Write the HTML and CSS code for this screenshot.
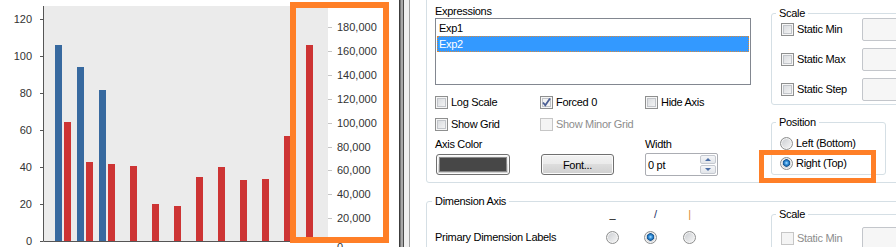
FILE: index.html
```html
<!DOCTYPE html>
<html lang="en">

<head>
    <meta charset="UTF-8">
    <meta name="viewport" content="width=device-width, initial-scale=1.0">
    <title>Chart Properties - Axes</title>
    <link rel="stylesheet" href="styles.css">
</head>

<body>
    <div class="window">
        <div class="chart">
            <svg width="398" height="247" viewBox="0 0 398 247">
                <rect x="44" y="6" width="284" height="235" fill="#ebebeb" />

                <!-- left axis -->
                <path d="M43.5 6V241.5H328" fill="none" stroke="#555" />
                <path d="M40 19.5h3M40 56.5h3M40 93.5h3M40 130.5h3M40 167.5h3M40 204.5h3M40 241.5h3" stroke="#555" />
                <g class="axis-label" text-anchor="end">
                    <text x="32" y="23">120</text>
                    <text x="32" y="60">100</text>
                    <text x="32" y="97">80</text>
                    <text x="32" y="134">60</text>
                    <text x="32" y="171">40</text>
                    <text x="32" y="208">20</text>
                    <text x="32" y="245">0</text>
                </g>

                <!-- right axis -->
                <path d="M328 27.5h4M328 51.5h4M328 75.5h4M328 99.5h4M328 123.5h4M328 147.5h4M328 170.5h4M328 194.5h4M328 218.5h4" stroke="#c4c4c4" />
                <g class="axis-label">
                    <text x="337" y="31">180,000</text>
                    <text x="337" y="55">160,000</text>
                    <text x="337" y="79">140,000</text>
                    <text x="337" y="103">120,000</text>
                    <text x="337" y="127">100,000</text>
                    <text x="337" y="151">80,000</text>
                    <text x="337" y="174">60,000</text>
                    <text x="337" y="198">40,000</text>
                    <text x="337" y="222">20,000</text>
                    <text x="337" y="251">0</text>
                </g>

                <g id="bars"></g>

                <rect x="293" y="5" width="93" height="235" fill="none" stroke="#ff7f27" stroke-width="6" />
            </svg>
        </div>

        <div class="splitter"></div>

        <div class="dialog">
            <div class="group expr-axis">
                <div class="col-left">
                    <div class="caption">Expressions</div>
                    <div class="listbox">
                        <div class="item">Exp1</div>
                        <div class="item selected">Exp2</div>
                    </div>

                    <div class="options">
                        <label class="check"><span class="box"></span>Log Scale</label>
                        <label class="check on"><span class="box"><svg width="11" height="11" viewBox="0 0 11 11"><path d="M2 5.5L4.3 8.3L9 1.5" fill="none" stroke="#4b5f94" stroke-width="1.8" /></svg></span>Forced 0</label>
                        <label class="check"><span class="box"></span>Hide Axis</label>
                        <label class="check"><span class="box"></span>Show Grid</label>
                        <label class="check off"><span class="box"></span>Show Minor Grid</label>
                    </div>

                    <div class="field-labels">
                        <span>Axis Color</span>
                        <span></span>
                        <span>Width</span>
                    </div>
                    <div class="field-row">
                        <div class="cell"><button class="btn color-btn"><span class="swatch"></span></button></div>
                        <div class="cell"><button class="btn font-btn">Font...</button></div>
                        <div class="cell">
                            <div class="spin-input">
                                <span class="value">0 pt</span>
                                <span class="spinner">
                                    <span class="spin up"></span>
                                    <span class="spin down"></span>
                                </span>
                            </div>
                        </div>
                    </div>
                </div>

                <div class="col-right">
                    <fieldset class="scale">
                        <legend>Scale</legend>
                        <div class="rows">
                            <div class="scale-row">
                                <label class="check"><span class="box"></span>Static Min</label>
                                <span class="textbox"></span>
                            </div>
                            <div class="scale-row">
                                <label class="check"><span class="box"></span>Static Max</label>
                                <span class="textbox"></span>
                            </div>
                            <div class="scale-row">
                                <label class="check"><span class="box"></span>Static Step</label>
                                <span class="textbox"></span>
                            </div>
                        </div>
                    </fieldset>

                    <fieldset class="position">
                        <legend>Position</legend>
                        <div class="rows">
                            <label class="option"><span class="radio"></span>Left (Bottom)</label>
                            <label class="option"><span class="radio checked"></span>Right (Top)</label>
                        </div>
                    </fieldset>
                </div>
            </div>

            <fieldset class="group dim-axis">
                <legend>Dimension Axis</legend>
                <div class="dim-body">
                    <div class="col-left">
                        <div class="dim-grid">
                            <span></span>
                            <span class="sym">_</span>
                            <span class="sym slash">/</span>
                            <span class="sym bar">|</span>
                            <span class="dim-label">Primary Dimension Labels</span>
                            <span class="radio"></span>
                            <span class="radio checked"></span>
                            <span class="radio"></span>
                        </div>
                    </div>
                    <div class="col-right">
                        <fieldset class="scale">
                            <legend>Scale</legend>
                            <div class="rows">
                                <div class="scale-row">
                                    <label class="check off"><span class="box"></span>Static Min</label>
                                    <span class="textbox"></span>
                                </div>
                            </div>
                        </fieldset>
                    </div>
                </div>
            </fieldset>

            <div class="highlight"></div>
        </div>
    </div>

    <script>
        // bar tops in pixels, one group every 22px
        const blueTops = [45, 67, 90];
        const redTops = [122, 162, 164, 166, 204, 206, 177, 167, 180, 179, 136, 45];
        const bars = document.getElementById('bars');
        const ns = 'http://www.w3.org/2000/svg';

        function addBar(x, top, color) {
            const r = document.createElementNS(ns, 'rect');
            r.setAttribute('x', x);
            r.setAttribute('y', top);
            r.setAttribute('width', 7);
            r.setAttribute('height', 241 - top);
            r.setAttribute('fill', color);
            bars.appendChild(r);
        }

        blueTops.forEach((top, i) => addBar(55 + i * 22, top, '#37699f'));
        redTops.forEach((top, i) => addBar(64 + i * 22, top, '#cd3434'));
    </script>
</body>

</html>
```

FILE: styles.css
```css
body {
    margin: 0;
    padding: 0;
    font-family: 'Liberation Sans', Arial, sans-serif;
    font-size: 11px;
    color: #000;
    background: #fff;
}

.window {
    display: flex;
    width: 896px;
    height: 247px;
    overflow: hidden;
}

.chart {
    width: 398px;
    flex: none;
}

.chart svg {
    display: block;
}

.axis-label text {
    font-family: 'Liberation Sans', Arial, sans-serif;
    font-size: 11px;
    fill: #333;
}

.splitter {
    width: 12px;
    flex: none;
    background: linear-gradient(to right, #fff 0 1px, #3c3c3c 1px 2px, #777 2px 3px, #a8a8a8 3px 5px, #4a4a4a 5px 6px, #f0f0f0 6px 11px, #a0a0a0 11px 12px);
}

.dialog {
    flex: 1;
    position: relative;
    overflow: hidden;
    padding-left: 16px;
    letter-spacing: -0.3px;
}

/* group boxes */
.group {
    width: 520px;
    box-sizing: border-box;
    border: 1px solid #d5dfe5;
    border-radius: 3px;
}

fieldset {
    margin: 0;
    padding: 0;
    min-width: 0;
    border: 1px solid #d5dfe5;
    border-radius: 3px;
}

legend {
    padding: 0 3px;
    margin-left: 4px;
    line-height: 13px;
}

.expr-axis {
    display: flex;
    height: 195px;
    margin-top: -12px;
    padding-left: 8px;
}

.col-left {
    width: 316px;
    flex: none;
}

.col-right {
    margin-left: 20px;
    display: flex;
    flex-direction: column;
    align-items: flex-start;
}

.expr-axis .col-left {
    padding-top: 16px;
}

.expr-axis .col-right {
    padding-top: 18px;
}

.caption {
    line-height: 13px;
}

/* list of expressions */
.listbox {
    height: 67px;
    box-sizing: border-box;
    border: 1px solid #828790;
    padding: 1px;
}

.item {
    height: 16px;
    line-height: 16px;
    padding-left: 2px;
}

.item.selected {
    background: #3399ff;
    color: #fff;
    border: 1px dotted #d98a3a;
    line-height: 14px;
    box-sizing: border-box;
    padding-left: 1px;
}

/* checkboxes */
.options {
    display: grid;
    grid-template-columns: 105px 105px 105px;
    row-gap: 9px;
    margin-top: 11px;
}

.check {
    display: flex;
    align-items: center;
    gap: 3px;
    height: 13px;
    line-height: 13px;
    white-space: nowrap;
}

.box {
    width: 13px;
    height: 13px;
    flex: none;
    box-sizing: border-box;
    border: 1px solid #8e8f8f;
    background: linear-gradient(135deg, #d3d6da, #f9f9f9);
    box-shadow: inset 0 0 0 1px #f6f6f6, inset 0 0 0 2px #c2c5ca;
    display: flex;
    align-items: center;
    justify-content: center;
}

.check.on .box {
    background: #f3f3f3;
}

.check.off {
    color: #8d8d8d;
}

.check.off .box {
    border-color: #c6c6c6;
    background: #f4f4f4;
    box-shadow: none;
}

.field-labels {
    display: grid;
    grid-template-columns: 105px 105px 105px;
    margin-top: 7px;
    line-height: 13px;
}

.field-row {
    display: grid;
    grid-template-columns: 105px 105px 105px;
    align-items: center;
    height: 23px;
    margin-top: 2px;
}

.btn {
    font: inherit;
    letter-spacing: inherit;
    color: #000;
    height: 21px;
    margin: 0 0 0 1px;
    padding: 0;
    box-sizing: border-box;
    border: 1px solid #707070;
    border-radius: 3px;
    background: linear-gradient(#f2f2f2 0%, #ebebeb 45%, #dddddd 50%, #cfcfcf 100%);
    box-shadow: inset 0 0 0 1px #fbfbfb;
}

.color-btn {
    width: 74px;
    display: flex;
    padding: 2px;
}

.swatch {
    flex: 1;
    border: 1px solid #8a8a8a;
    background: #474747;
}

.font-btn {
    width: 73px;
}

.spin-input {
    width: 73px;
    height: 23px;
    box-sizing: border-box;
    border: 1px solid #abadb3;
    border-radius: 2px;
    display: flex;
    align-items: center;
}

.spin-input .value {
    flex: 1;
    padding-left: 2px;
}

.spinner {
    width: 16px;
    height: 19px;
    margin-right: 1px;
    display: flex;
    flex-direction: column;
    gap: 1px;
}

.spin {
    flex: 1;
    box-sizing: border-box;
    border: 1px solid #c5c9d0;
    border-radius: 2px;
    background: linear-gradient(#f5f6f8, #e2e5ea);
    display: flex;
    align-items: center;
    justify-content: center;
}

.spin::after {
    content: "";
    border-left: 3px solid transparent;
    border-right: 3px solid transparent;
}

.spin.up::after {
    border-bottom: 3px solid #4c6ea5;
}

.spin.down::after {
    border-top: 3px solid #4c6ea5;
}

/* scale and position boxes */
.scale {
    width: 140px;
}

.scale .rows {
    padding-left: 9px;
    margin-top: -2px;
    padding-bottom: 3px;
}

.scale-row {
    display: flex;
    align-items: center;
    height: 23px;
}

.scale-row + .scale-row {
    margin-top: 7px;
}

.scale-row .check {
    width: 97px;
}

.textbox {
    width: 60px;
    height: 23px;
    box-sizing: border-box;
    border: 1px solid #c3c6cb;
    border-radius: 2px;
    background: #f6f6f6;
}

.position {
    width: 113px;
    margin-top: 11px;
}

.position .rows {
    padding: 8px 0 4px 8px;
    display: flex;
    flex-direction: column;
    gap: 7px;
}

.option {
    display: flex;
    align-items: center;
    gap: 3px;
    height: 13px;
    line-height: 13px;
}

.radio {
    width: 13px;
    height: 13px;
    flex: none;
    box-sizing: border-box;
    border: 1px solid #8e8f8f;
    border-radius: 50%;
    background: linear-gradient(135deg, #c9ccd0, #f8f8f8);
    box-shadow: inset 0 0 0 1px #f4f4f4;
}

.radio.checked {
    background: radial-gradient(circle at 50% 45%, #b5e3ff 0, #3d9be6 1.5px, #12528f 3.5px, #cfd3d8 4px, #f4f4f4 100%);
}

/* dimension axis */
.dim-axis {
    margin-top: 12px;
    height: 80px;
}

.dim-axis > legend {
    margin-left: 5px;
}

.dim-body {
    display: flex;
    padding-left: 8px;
}

.dim-grid {
    display: grid;
    grid-template-columns: 171px 38px 39px 13px;
    grid-template-rows: 13px 13px;
    row-gap: 10px;
    line-height: 13px;
}

.sym {
    width: 13px;
    text-align: center;
}

.sym.slash {
    padding-left: 5px;
    color: #1d2f66;
}

.sym.bar {
    color: #e08a2c;
}

.dim-label {
    align-self: center;
}

.dim-axis .scale .rows {
    margin-top: 6px;
}

/* annotation box */
.highlight {
    position: absolute;
    left: 349px;
    top: 150px;
    width: 117px;
    height: 33px;
    box-sizing: border-box;
    border: 5px solid #ff7f27;
}
```
